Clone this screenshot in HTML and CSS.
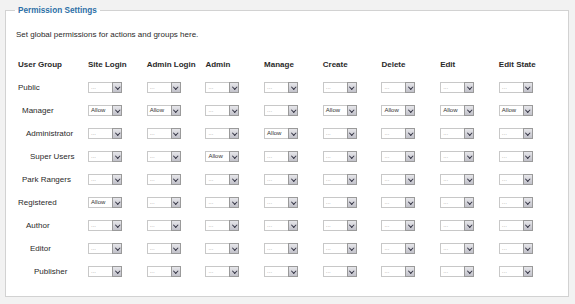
FILE: index.html
```html
<!DOCTYPE html>
<html>
<head>
<meta charset="utf-8">
<link rel="stylesheet" href="styles.css">
</head>
<body>
<fieldset class="panel">
  <legend class="legend">Permission Settings</legend>
  <p class="desc">Set global permissions for actions and groups here.</p>
  <div class="grid">
    <div class="row head">
      <div>User Group</div><div>Site Login</div><div>Admin Login</div><div>Admin</div><div>Manage</div><div>Create</div><div>Delete</div><div>Edit</div><div>Edit State</div>
    </div>
    <div class="row"><div class="grp l0">Public</div>
      <div><span class="sel"><span class="val dots">...</span><span class="btn"></span></span></div>
      <div><span class="sel"><span class="val dots">...</span><span class="btn"></span></span></div>
      <div><span class="sel"><span class="val dots">...</span><span class="btn"></span></span></div>
      <div><span class="sel"><span class="val dots">...</span><span class="btn"></span></span></div>
      <div><span class="sel"><span class="val dots">...</span><span class="btn"></span></span></div>
      <div><span class="sel"><span class="val dots">...</span><span class="btn"></span></span></div>
      <div><span class="sel"><span class="val dots">...</span><span class="btn"></span></span></div>
      <div><span class="sel"><span class="val dots">...</span><span class="btn"></span></span></div>
    </div>
    <div class="row"><div class="grp l1">Manager</div>
      <div><span class="sel"><span class="val">Allow</span><span class="btn"></span></span></div>
      <div><span class="sel"><span class="val">Allow</span><span class="btn"></span></span></div>
      <div><span class="sel"><span class="val dots">...</span><span class="btn"></span></span></div>
      <div><span class="sel"><span class="val dots">...</span><span class="btn"></span></span></div>
      <div><span class="sel"><span class="val">Allow</span><span class="btn"></span></span></div>
      <div><span class="sel"><span class="val">Allow</span><span class="btn"></span></span></div>
      <div><span class="sel"><span class="val">Allow</span><span class="btn"></span></span></div>
      <div><span class="sel"><span class="val">Allow</span><span class="btn"></span></span></div>
    </div>
    <div class="row"><div class="grp l2">Administrator</div>
      <div><span class="sel"><span class="val dots">...</span><span class="btn"></span></span></div>
      <div><span class="sel"><span class="val dots">...</span><span class="btn"></span></span></div>
      <div><span class="sel"><span class="val dots">...</span><span class="btn"></span></span></div>
      <div><span class="sel"><span class="val">Allow</span><span class="btn"></span></span></div>
      <div><span class="sel"><span class="val dots">...</span><span class="btn"></span></span></div>
      <div><span class="sel"><span class="val dots">...</span><span class="btn"></span></span></div>
      <div><span class="sel"><span class="val dots">...</span><span class="btn"></span></span></div>
      <div><span class="sel"><span class="val dots">...</span><span class="btn"></span></span></div>
    </div>
    <div class="row"><div class="grp l3">Super Users</div>
      <div><span class="sel"><span class="val dots">...</span><span class="btn"></span></span></div>
      <div><span class="sel"><span class="val dots">...</span><span class="btn"></span></span></div>
      <div><span class="sel"><span class="val">Allow</span><span class="btn"></span></span></div>
      <div><span class="sel"><span class="val dots">...</span><span class="btn"></span></span></div>
      <div><span class="sel"><span class="val dots">...</span><span class="btn"></span></span></div>
      <div><span class="sel"><span class="val dots">...</span><span class="btn"></span></span></div>
      <div><span class="sel"><span class="val dots">...</span><span class="btn"></span></span></div>
      <div><span class="sel"><span class="val dots">...</span><span class="btn"></span></span></div>
    </div>
    <div class="row"><div class="grp l1">Park Rangers</div>
      <div><span class="sel"><span class="val dots">...</span><span class="btn"></span></span></div>
      <div><span class="sel"><span class="val dots">...</span><span class="btn"></span></span></div>
      <div><span class="sel"><span class="val dots">...</span><span class="btn"></span></span></div>
      <div><span class="sel"><span class="val dots">...</span><span class="btn"></span></span></div>
      <div><span class="sel"><span class="val dots">...</span><span class="btn"></span></span></div>
      <div><span class="sel"><span class="val dots">...</span><span class="btn"></span></span></div>
      <div><span class="sel"><span class="val dots">...</span><span class="btn"></span></span></div>
      <div><span class="sel"><span class="val dots">...</span><span class="btn"></span></span></div>
    </div>
    <div class="row"><div class="grp l0">Registered</div>
      <div><span class="sel"><span class="val">Allow</span><span class="btn"></span></span></div>
      <div><span class="sel"><span class="val dots">...</span><span class="btn"></span></span></div>
      <div><span class="sel"><span class="val dots">...</span><span class="btn"></span></span></div>
      <div><span class="sel"><span class="val dots">...</span><span class="btn"></span></span></div>
      <div><span class="sel"><span class="val dots">...</span><span class="btn"></span></span></div>
      <div><span class="sel"><span class="val dots">...</span><span class="btn"></span></span></div>
      <div><span class="sel"><span class="val dots">...</span><span class="btn"></span></span></div>
      <div><span class="sel"><span class="val dots">...</span><span class="btn"></span></span></div>
    </div>
    <div class="row"><div class="grp l2">Author</div>
      <div><span class="sel"><span class="val dots">...</span><span class="btn"></span></span></div>
      <div><span class="sel"><span class="val dots">...</span><span class="btn"></span></span></div>
      <div><span class="sel"><span class="val dots">...</span><span class="btn"></span></span></div>
      <div><span class="sel"><span class="val dots">...</span><span class="btn"></span></span></div>
      <div><span class="sel"><span class="val dots">...</span><span class="btn"></span></span></div>
      <div><span class="sel"><span class="val dots">...</span><span class="btn"></span></span></div>
      <div><span class="sel"><span class="val dots">...</span><span class="btn"></span></span></div>
      <div><span class="sel"><span class="val dots">...</span><span class="btn"></span></span></div>
    </div>
    <div class="row"><div class="grp l3">Editor</div>
      <div><span class="sel"><span class="val dots">...</span><span class="btn"></span></span></div>
      <div><span class="sel"><span class="val dots">...</span><span class="btn"></span></span></div>
      <div><span class="sel"><span class="val dots">...</span><span class="btn"></span></span></div>
      <div><span class="sel"><span class="val dots">...</span><span class="btn"></span></span></div>
      <div><span class="sel"><span class="val dots">...</span><span class="btn"></span></span></div>
      <div><span class="sel"><span class="val dots">...</span><span class="btn"></span></span></div>
      <div><span class="sel"><span class="val dots">...</span><span class="btn"></span></span></div>
      <div><span class="sel"><span class="val dots">...</span><span class="btn"></span></span></div>
    </div>
    <div class="row"><div class="grp l4">Publisher</div>
      <div><span class="sel"><span class="val dots">...</span><span class="btn"></span></span></div>
      <div><span class="sel"><span class="val dots">...</span><span class="btn"></span></span></div>
      <div><span class="sel"><span class="val dots">...</span><span class="btn"></span></span></div>
      <div><span class="sel"><span class="val dots">...</span><span class="btn"></span></span></div>
      <div><span class="sel"><span class="val dots">...</span><span class="btn"></span></span></div>
      <div><span class="sel"><span class="val dots">...</span><span class="btn"></span></span></div>
      <div><span class="sel"><span class="val dots">...</span><span class="btn"></span></span></div>
      <div><span class="sel"><span class="val dots">...</span><span class="btn"></span></span></div>
    </div>
  </div>
</fieldset>
</body>
</html>
```

FILE: styles.css
```css
html, body {
  margin: 0;
  padding: 0;
  background: #f2f2f2;
  font-family: "Liberation Sans", Arial, sans-serif;
  font-size: 8px;
  color: #2a2a2a;
}
.panel {
  margin: 6px 7px 0 5px;
  height: 291px;
  box-sizing: border-box;
  border: 1px solid #d2d2d2;
  background: #fff;
  padding: 0 10px 0 12px;
}
.legend {
  margin-left: -3px;
  padding: 0 3px;
  font-size: 8.2px;
  font-weight: bold;
  color: #2d6fa6;
}
.desc {
  margin: 15px 0 0 -2px;
  line-height: 10px;
  color: #2a2a2a;
}
.grid {
  margin-top: 13px;
  margin-left: 0;
}
.row {
  display: grid;
  grid-template-columns: 70px repeat(8, 58.7px);
  height: 23px;
  align-items: center;
  color: #2a2a2a;
}
.head {
  font-weight: bold;
  height: 23px;
}
.grp.l1 { padding-left: 4px; }
.grp.l2 { padding-left: 8px; }
.grp.l3 { padding-left: 12px; }
.grp.l4 { padding-left: 16px; }
.sel {
  display: inline-flex;
  width: 34px;
  height: 11px;
  box-sizing: border-box;
  border: 1px solid #c8c8c8;
  background: #fff;
}
.val {
  flex: 1;
  font-size: 6px;
  line-height: 9px;
  padding-left: 2px;
  color: #333;
}
.val.dots { color: #999; }
.btn {
  width: 10px;
  height: 11px;
  margin: -1px -1px 0 0;
  box-sizing: border-box;
  border: 1px solid #9a9a9a;
  background: linear-gradient(#e6e6ea, #c2c2ca);
  position: relative;
}
.btn::after {
  content: "";
  position: absolute;
  left: 2.5px;
  top: 1.5px;
  width: 2.5px;
  height: 2.5px;
  border-right: 1.5px solid #334;
  border-bottom: 1.5px solid #334;
  transform: rotate(45deg);
}
```
